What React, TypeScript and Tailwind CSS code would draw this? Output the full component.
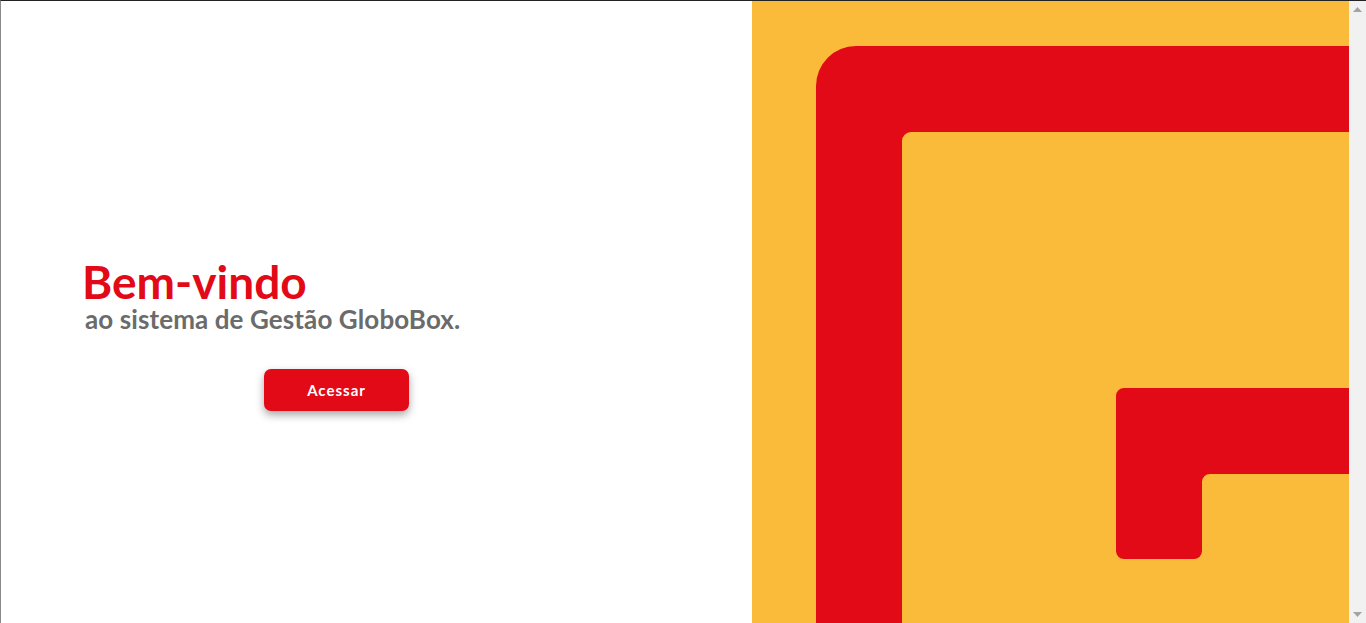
export default function App() {
  return (
    <div className="h-[623px] w-full overflow-hidden border-t border-l border-t-[#222222] border-l-[#8a8a8a] bg-white">
      <div className="flex h-full w-full">
        <div className="flex w-[751px] shrink-0 flex-col bg-white pl-[81px] pt-[261px] font-['Lato','Noto_Sans',sans-serif]">
          <h1 className="text-[46px] font-bold leading-[40px] text-[#e20a17]">Bem-vindo</h1>
          <p className="mt-[3px] pl-[3px] text-[26px] font-bold leading-[28px] tracking-[0.1px] text-[#6b6b6b]">
            ao sistema de Gestão GloboBox.
          </p>
          <button className="ml-[182px] mt-[36px] h-[42px] w-[145px] rounded-[7px] bg-[#e20a17] text-[15px] font-bold tracking-[1px] text-white shadow-[0_4px_8px_rgba(0,0,0,0.35)]">
            Acessar
          </button>
        </div>
        <div className="relative flex-1 bg-[#fbbb3a]">
          <svg className="absolute inset-0 h-full w-full" viewBox="0 0 597 622" preserveAspectRatio="xMinYMin slice">
            <path
              d="M64,622 V85 A40,40 0 0 1 104,45 H597 V131 H159 A9,9 0 0 0 150,140 V622 Z"
              fill="#e20a17"
            />
            <path
              d="M364,395 A8,8 0 0 1 372,387 H597 V473 H458 A8,8 0 0 0 450,481 V550 A8,8 0 0 1 442,558 H372 A8,8 0 0 1 364,550 Z"
              fill="#e20a17"
            />
          </svg>
        </div>
        {/* scrollbar track */}
        <div className="flex w-[17px] shrink-0 flex-col items-center justify-between bg-[#f1f1f1] py-[6px]">
          <svg width="9" height="5" viewBox="0 0 9 5">
            <path d="M4.5,0 L9,5 H0 Z" fill="#a3a3a3" />
          </svg>
          <svg width="9" height="5" viewBox="0 0 9 5">
            <path d="M0,0 H9 L4.5,5 Z" fill="#a3a3a3" />
          </svg>
        </div>
      </div>
    </div>
  );
}
